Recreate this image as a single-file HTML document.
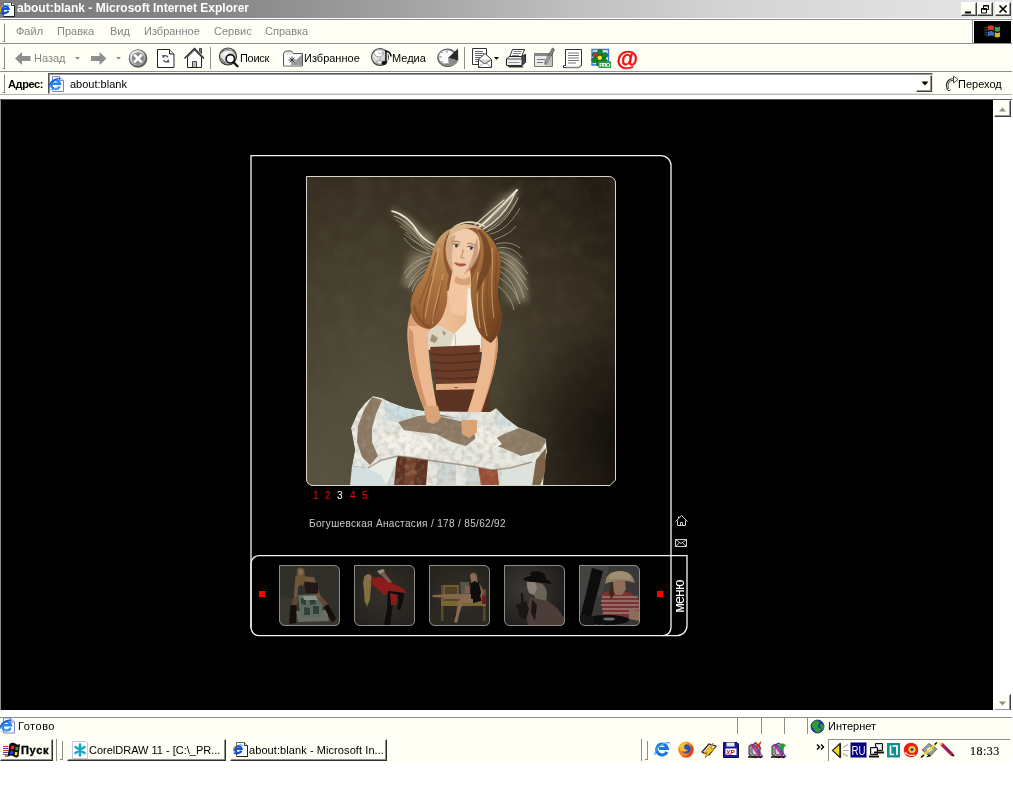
<!DOCTYPE html>
<html lang="ru">
<head>
<meta charset="utf-8">
<title>about:blank - Microsoft Internet Explorer</title>
<style>
*{box-sizing:border-box;margin:0;padding:0}
html,body{width:1013px;height:786px;overflow:hidden;background:#fff}
body{position:relative;font-family:"Liberation Sans","DejaVu Sans",sans-serif;font-size:11px;color:#000}
.abs{position:absolute}
.t{position:absolute;white-space:nowrap;line-height:13px;height:13px;will-change:transform}
#win{left:0;top:0;width:1012px;height:762px;background:#fffff6}
#title{left:0;top:0;width:1012px;height:18px;background:linear-gradient(90deg,#7c7c7c 0,#848484 20%,#a2a2a2 40%,#c0c0c0 57%,#d4d4d4 72%,#e6e6e6 100%)}
#title .t{left:17px;top:2px;color:#fff;font-weight:bold;font-size:12px;letter-spacing:0}
#menu{will-change:auto}
.cb{position:absolute;top:2px;width:16px;height:14px;background:#fffff6;border:1px solid;border-color:#fff #404040 #404040 #fff;box-shadow:inset -1px -1px 0 #9a9a94}
.hl{position:absolute;height:1px;left:0;width:1012px}
.grip{position:absolute;width:3px;border:1px solid;border-color:#fff #8a8a84 #8a8a84 #fff;left:2px}
.gray{color:#858585}
.sep{position:absolute;width:2px;border-left:1px solid #8e8e88;border-right:1px solid #fff}
#content{left:1px;top:99px;width:992px;height:611px;background:#000}
.sbtn{position:absolute;left:994px;width:17px;height:17px;background:#fffff6;border:1px solid;border-color:#fff #404040 #404040 #fff;box-shadow:inset -1px -1px 0 #9a9a94}
.tb{position:absolute;top:739px;height:22px;background:#fffff6;border:1px solid;border-color:#fff #303030 #303030 #fff;box-shadow:inset -1px -1px 0 #8e8e88}
.pan{position:absolute;top:717px;height:17px;border-left:1px solid #8e8e88;border-top:1px solid #8e8e88}
</style>
</head>
<body>
<div id="win" class="abs"></div>

<!-- title bar -->
<div id="title" class="abs"><div class="t">about:blank - Microsoft Internet Explorer</div></div>
<div class="cb" style="left:961px"></div>
<div class="cb" style="left:977px"></div>
<div class="cb" style="left:995px"></div>

<!-- menu bar -->
<div class="hl" style="top:19px;background:#8e8e88"></div>
<div class="hl" style="top:20px;background:#fff"></div>
<div class="grip" style="top:23px;height:19px"></div>
<div class="t gray" style="left:16px;top:25px">Файл</div>
<div class="t gray" style="left:57px;top:25px">Правка</div>
<div class="t gray" style="left:110px;top:25px">Вид</div>
<div class="t gray" style="left:144px;top:25px">Избранное</div>
<div class="t gray" style="left:214px;top:25px">Сервис</div>
<div class="t gray" style="left:265px;top:25px">Справка</div>
<div class="abs" style="left:972px;top:20px;width:1px;height:23px;background:#8e8e88"></div>
<div class="abs" style="left:974px;top:21px;width:37px;height:22px;background:#000"></div>

<!-- toolbar -->
<div class="hl" style="top:43px;background:#8e8e88"></div>
<div class="hl" style="top:44px;background:#fff"></div>
<div class="grip" style="top:47px;height:22px"></div>
<div class="t gray" style="left:34px;top:52px">Назад</div>
<div class="t" style="left:240px;top:52px;letter-spacing:-0.3px">Поиск</div>
<div class="t" style="left:304px;top:52px">Избранное</div>
<div class="t" style="left:392px;top:52px">Медиа</div>
<div class="sep" style="left:210px;top:47px;height:22px"></div>
<div class="sep" style="left:464px;top:47px;height:22px"></div>

<!-- address bar -->
<div class="hl" style="top:71px;background:#8e8e88"></div>
<div class="hl" style="top:72px;background:#fff"></div>
<div class="grip" style="top:74px;height:19px"></div>
<div class="t" style="left:8px;top:78px;font-weight:bold;letter-spacing:-0.4px">Адрес:</div>
<div class="abs" style="left:48px;top:73px;width:885px;height:21px;background:#fff;border:1px solid;border-color:#55554f #e8e6df #e8e6df #55554f;box-shadow:inset 1px 1px 0 #9a9a94"></div>
<div class="t" style="left:70px;top:78px">about:blank</div>
<div class="abs" style="left:916px;top:75px;width:16px;height:17px;background:#fffff6;border:1px solid;border-color:#fff #404040 #404040 #fff;box-shadow:inset -1px -1px 0 #9a9a94"></div>
<div class="t" style="left:958px;top:78px">Переход</div>
<div class="hl" style="top:94px;background:#b5b3ad"></div>
<div class="hl" style="top:95px;height:4px;background:#fff"></div>

<!-- ICONS-START -->
<svg class="abs" style="left:0;top:0;z-index:5" width="1013" height="120" viewBox="0 0 1013 120">
<defs>
<g id="ie">
<path d="M4.500 .5H11.500L15.500 4.500V15.500H4.500Z" fill="#fff" stroke="#7d86c8" stroke-width="1"/>
<path d="M11.500 .5V4.500H15.500" fill="#dfe3f4" stroke="#7d86c8" stroke-width="1"/>
<path d="M11.600 10.400A4.400 4.400 0 1 1 11.900 7.700H4.200" fill="none" stroke="#2488f0" stroke-width="2.400"/>
<path d="M1 11.500C.5 6.500 8 1.500 12.500 3" fill="none" stroke="#2456c8" stroke-width="1.200"/>
<path d="M2 13.500C5 14.500 9 12.500 12 9.500" fill="none" stroke="#6cc0ff" stroke-width="1"/>
</g>
<g id="ie2">
<path d="M3.500 1.500H11.500L14.500 4.500V15.500H3.500Z" fill="#fff" stroke="#6a6a6a" stroke-width="1"/>
<path d="M14.500 4.500V15.500H3.500" fill="none" stroke="#222" stroke-width="1"/>
<path d="M11.500 1.500V4.500H14.500" fill="#e4e4e4" stroke="#333" stroke-width="1"/>
<path d="M8.400 9.800A3.300 3.300 0 1 1 8.600 7.800H2.800" fill="none" stroke="#1450dc" stroke-width="2.200"/>
<path d="M6 4.300C7.500 3.500 9 4 9.500 5" fill="none" stroke="#3aa4f4" stroke-width="1.200"/>
<path d="M.6 10.500C0 7.500 1.500 5.500 3.500 4.500" fill="none" stroke="#d8a020" stroke-width="1.200"/>
<path d="M.8 11.500C2 13 4 13 5.500 12.500" fill="none" stroke="#1a2a9c" stroke-width="1.200"/>
</g>
<radialGradient id="gl" cx="0.4" cy="0.35" r="0.7"><stop offset="0" stop-color="#ffffff"/><stop offset="0.6" stop-color="#d2d2d2"/><stop offset="1" stop-color="#8a8a8a"/></radialGradient>
</defs>
<!-- title icon -->
<use href="#ie2" x="0" y="1"/>
<!-- caption buttons glyphs -->
<path d="M965 12.500h6" stroke="#000" stroke-width="2"/>
<path d="M983.500 5.500h5v4h-5zM983.500 6h5M981.500 8.500h5v4.500h-5zM981.500 9h5" fill="#fffff6" stroke="#000" stroke-width="1"/>
<path d="M999.500 5.500l7 7M1006.500 5.500l-7 7" stroke="#000" stroke-width="1.700"/>
<!-- throbber windows flag -->
<g transform="translate(985,24.500) scale(0.88)" opacity="0.9">
<path d="M3 2C6 .5 8 .5 10 2V7C8 5.500 6 5.500 3 7Z" fill="#e8442c"/>
<path d="M11 2.300C13 3.500 15 3.500 17 2.300V7.300C15 8.500 13 8.500 11 7.300Z" fill="#3cb44a"/>
<path d="M3 8.500C6 7 8 7 10 8.500V13.500C8 12 6 12 3 13.500Z" fill="#3c78e0"/>
<path d="M11 8.800C13 10 15 10 17 8.800V13.800C15 15 13 15 11 13.800Z" fill="#f0c828"/>
<path d="M0 3v10M1.500 2.500v11" stroke="#9aa" stroke-width="0.800" stroke-dasharray="1 1"/>
</g>
<!-- back / forward -->
<path d="M15 58.500L22 52V56H30.500V61H22V65Z" fill="#8e8e8e"/>
<path d="M75 57h5l-2.500 2.800z" fill="#8e8e8e"/>
<path d="M106.500 58.500L99.500 52V56H91V61H99.500V65Z" fill="#8e8e8e"/>
<path d="M116 57h5l-2.500 2.800z" fill="#8e8e8e"/>
<!-- stop -->
<circle cx="138" cy="58.500" r="9.300" fill="#5a5a5a"/>
<circle cx="137.600" cy="58" r="8" fill="url(#gl)"/>
<circle cx="138" cy="58.500" r="6.200" fill="#8c8c8c"/>
<path d="M134.200 54.700l7.600 7.600M141.800 54.700l-7.600 7.600" stroke="#fff" stroke-width="2.600"/>
<!-- refresh -->
<path d="M157.500 49.500H169.500L174 54V67.500H157.500Z" fill="#fff" stroke="#222" stroke-width="1"/>
<path d="M169.500 49.500V54H174" fill="#ddd" stroke="#222" stroke-width="1"/>
<path d="M168 57.500A3 3 0 0 0 163 56.500M163.500 60A3 3 0 0 0 168.500 61" fill="none" stroke="#555" stroke-width="1.300"/>
<path d="M162 54.500l3 1.500-2 2.500zM169.500 63l-3-1.500 2-2.500z" fill="#555"/>
<!-- home -->
<path d="M184.500 58.500L194.500 48.500L204 58.500" fill="none" stroke="#222" stroke-width="1.300"/>
<path d="M187.500 57V67.500H201.500V57L194.500 50Z" fill="#fff" stroke="#222" stroke-width="1"/>
<path d="M199.500 48.500h2v5l-2-2z" fill="#888" stroke="#222" stroke-width="0.800"/>
<path d="M192.500 67V61.500H196.500V67" fill="#bbb" stroke="#444" stroke-width="1"/>
<!-- search -->
<circle cx="228" cy="56.500" r="8.500" fill="url(#gl)" stroke="#3a3a3a" stroke-width="1.200"/>
<path d="M221.500 52.500c2.500-3 6-3.500 9-2M220.500 58c2 1.500 3 4 5.500 5.500M231 49.500c2 1 4 3 5 5.500" fill="none" stroke="#777" stroke-width="1.200"/>
<circle cx="230.300" cy="58.800" r="4.200" fill="#fdfdfd" stroke="#111" stroke-width="1.600"/>
<path d="M233.500 62.200l4 4" stroke="#111" stroke-width="2.300" stroke-linecap="round"/>
<!-- favorites folder -->
<path d="M283.500 53.500L285.500 51H291.500L293.500 53.500H302.500V66H283.500Z" fill="#e6e6e6" stroke="#555" stroke-width="1"/>
<path d="M284 54.500H302V65.500H284Z" fill="#fafafa"/>
<path d="M302 54.500V65.500H290Z" fill="#9a9a9a"/>
<path d="M292 56.500v7M288.500 60h7M289.500 57.500l5 5M294.500 57.500l-5 5" stroke="#333" stroke-width="0.900"/>
<!-- media -->
<circle cx="380" cy="57" r="8.500" fill="url(#gl)" stroke="#444" stroke-width="1.100"/>
<path d="M373.500 53c2-3 6-4 9-2.500l1 4-3 2.500-4-.5zM376 62l4-1.500 4 2c-2 2-6 2-8-.5z" fill="#fff" stroke="#888" stroke-width="0.800"/>
<path d="M378 52.500l3 1.500 2.500-1M380.500 57l-.5 3.500" stroke="#999" stroke-width="0.800" fill="none"/>
<path d="M386 63V51C388.500 51.500 391 53.500 391 56.500" fill="none" stroke="#111" stroke-width="1.600"/>
<ellipse cx="384" cy="63" rx="2.500" ry="1.900" fill="#111"/>
<path d="M387.300 52.500v9" stroke="#fff" stroke-width="0.900"/>
<!-- history -->
<ellipse cx="447.500" cy="57.800" rx="9.800" ry="8.800" fill="#9a9a9a" stroke="#444" stroke-width="1"/>
<ellipse cx="446.800" cy="57" rx="8.300" ry="7.300" fill="#fbfbfb" stroke="#777" stroke-width="0.700"/>
<path d="M448 58L458 48.500L458.300 60.500Z" fill="#2a2a2a"/>
<path d="M448 58L458.300 60.500C457 64 453 66.500 449 66.500Z" fill="#8a8a8a"/>
<path d="M447 50.500v2M439.500 57h2M447 63v1.800M441.500 52l1.200 1.200M441.500 62.500l1.200-1.200" stroke="#555" stroke-width="0.900"/>
<!-- mail -->
<path d="M472.500 48.500H486.500V64.500H472.500Z" fill="#fff" stroke="#333" stroke-width="1"/>
<path d="M475 51.500h8M475 53.500h9M475 55.500h7M475 57.500h5M475 59.500h4M475 61.500h3" stroke="#6a6a6a" stroke-width="1"/>
<path d="M478.500 59.500L485 53.500L491.500 59.500V67.500H478.500Z" fill="#fff" stroke="#333" stroke-width="1"/>
<path d="M478.500 59.500L485 64L491.500 59.500" fill="#d4d4d4" stroke="#444" stroke-width="0.900"/>
<path d="M479 67L483.500 63M491 67L486.500 63" stroke="#888" stroke-width="0.800"/>
<path d="M494 57h5l-2.500 2.800z" fill="#000"/>
<!-- print -->
<path d="M512.500 49.500H524.500L521.500 57H509.500Z" fill="#fff" stroke="#333" stroke-width="1"/>
<path d="M513.500 51.500h8M512.800 53.500h8M512 55.500h7" stroke="#7a7a7a" stroke-width="0.900"/>
<path d="M506.500 59L509.500 56.500H521.500L525.500 54.500V62L522 65.500H506.500Z" fill="#efefef" stroke="#222" stroke-width="1"/>
<path d="M521.500 56.500L525.500 54.500V62L522 65.500V59Z" fill="#4a4a4a" stroke="#222" stroke-width="0.800"/>
<path d="M506.500 59H522" stroke="#444" stroke-width="0.900"/>
<path d="M507.500 65.500H522L523.500 67.500H509Z" fill="#333"/>
<path d="M508.500 62.500h11" stroke="#999" stroke-width="1"/>
<!-- edit -->
<path d="M534.500 53.500H552.500V66.500H534.500Z" fill="#e9e9e9" stroke="#777" stroke-width="1"/>
<path d="M534.500 53.500H552.500V56H534.500Z" fill="#888"/>
<path d="M537 59.500h8M537 62.500h6" stroke="#777" stroke-width="1"/>
<path d="M552.500 48L554.500 49.500L547.500 63L545 64.500L545.200 61.500Z" fill="#8a8a8a" stroke="#444" stroke-width="0.800"/>
<path d="M546 56h6v10h-6z" fill="#aaa" opacity="0.600"/>
<!-- discuss -->
<path d="M565.500 49.500H581.500V65.500L579 67.500H563.500V65.500H565.500Z" fill="#fff" stroke="#333" stroke-width="1"/>
<path d="M566 67.500H579L581.500 65.500" fill="none" stroke="#888" stroke-width="1.600"/>
<path d="M568 53h11M568 55.500h11M568 58h11M568 60.500h11M568 63h8" stroke="#666" stroke-width="0.900"/>
<!-- icq -->
<path d="M592 49.500H608.500V65H592Z" fill="#e6eefb" stroke="#3a78e4" stroke-width="1.400"/>
<g fill="#12862a" stroke="#0a5a18" stroke-width="0.600"><ellipse cx="600" cy="52.800" rx="2.700" ry="3.300"/><ellipse cx="604.600" cy="55.500" rx="3.300" ry="2.700" transform="rotate(-30 604.600 55.500)"/><ellipse cx="604" cy="60.800" rx="3.300" ry="2.700" transform="rotate(35 604 60.800)"/><ellipse cx="599" cy="63" rx="2.700" ry="3.200"/><ellipse cx="594.800" cy="60" rx="3.200" ry="2.600" transform="rotate(-30 594.800 60)"/><ellipse cx="595.400" cy="54.800" rx="3.200" ry="2.600" transform="rotate(30 595.400 54.800)"/></g>
<circle cx="599.800" cy="57.800" r="2.100" fill="#f8e420"/>
<circle cx="595.300" cy="55" r="2.100" fill="#e62020"/>
<path d="M598.500 61.500H611V68H598.500Z" fill="#2c9c3c"/>
<text x="599.300" y="67.200" font-family="Liberation Sans,sans-serif" font-size="6" font-weight="bold" fill="#fff" textLength="11">PRO</text>
<!-- @ -->
<text x="616.500" y="65.500" font-family="Liberation Sans,sans-serif" font-size="22" font-weight="bold" fill="#f01010" stroke="#f01010" stroke-width="0.500">@</text>
<!-- address bar icon -->
<use href="#ie" x="48" y="76"/>
<path d="M921.500 81.500h7l-3.500 4z" fill="#000"/>
<!-- go icon -->
<path d="M948 89C946 84 948 79.500 953 79.500H955" fill="none" stroke="#222" stroke-width="2.600"/><path d="M948 88.500C946.500 84 948.500 79.500 953 79.500H955" fill="none" stroke="#fffff6" stroke-width="0.900"/>
<path d="M953.500 76l4.500 3.500-4.500 3.500z" fill="#fffff6" stroke="#333" stroke-width="0.900"/>
<path d="M947 89.500c1 1.500 3 1.500 3.500 0" fill="none" stroke="#333" stroke-width="1"/>
<!-- scroll arrow -->
<path d="M999 111.500h7l-3.500-4z" fill="#8e8e8e"/>
</svg>
<svg class="abs" style="left:0;top:700px;z-index:5" width="1013" height="66" viewBox="0 700 1013 66">
<path d="M999 701.500h7l-3.500 4z" fill="#8e8e8e"/>
<!-- status ie -->
<use href="#ie" x="-1" y="717.500"/>
<!-- globe -->
<circle cx="817.500" cy="726.500" r="6.500" fill="#1c3cb4" stroke="#102060" stroke-width="0.800"/>
<path d="M813 722c2-2 5-2 6 0s-2 3-1 5 3 1 3 3-3 3-5 2-1-3-3-4-1-4 0-6zM821 724c2 0 3 2 3 4s-2 2-3 1 0-3-1-4z" fill="#2c9c34"/>
<!-- start flag -->
<g transform="translate(3,742)">
<path d="M6.500 2C8.500 .3 11 .3 13 2C14.500 3 15.500 3 17 1.800L15.500 14.500C14 15.800 12.500 15.800 11 14.500C9 13 7 13 4.500 14.800Z" fill="#0a0a0a"/>
<path d="M8 4.200C9 3.400 10.200 3.400 11.300 4.200L10.900 7.500C9.900 6.900 8.700 6.900 7.500 7.600Z" fill="#f02818"/>
<path d="M12.700 4.800C13.500 5.300 14.300 5.300 15.300 4.700L14.800 8C14 8.500 13.200 8.500 12.300 8Z" fill="#20b030"/>
<path d="M7.200 9.300C8.300 8.600 9.500 8.600 10.600 9.300L10.200 12.500C9.200 11.900 8 11.900 6.800 12.600Z" fill="#2440e0"/>
<path d="M12 9.800C12.800 10.300 13.600 10.300 14.600 9.700L14.100 13C13.300 13.500 12.500 13.500 11.600 13Z" fill="#f4dc20"/>
<path d="M0 4.500h5.500M0 8.500h5M0 12.500h4.500" stroke="#e03030" stroke-width="1"/>
<path d="M0 6.500h5.200M0 10.500h4.800" stroke="#3048d0" stroke-width="1"/>
<path d="M1 5.500h4M1 7.500h4M1 9.500h3.800M1 11.500h3.500" stroke="#fff" stroke-width="1"/>
<path d="M2 14h3.500" stroke="#222" stroke-width="1"/>
</g>
<!-- taskbar divider -->
<path d="M56.500 739v22" stroke="#8e8e88"/><path d="M57.500 739v22" stroke="#fff"/>
<path d="M60.500 741v18M60 741.500h2" stroke="#fff"/><path d="M62.500 741v18.500M60 759.500h3" stroke="#8e8e88"/>
<!-- corel icon -->
<path d="M72.500 741.500H86L87.500 743V758.500H72.500Z" fill="#fff" stroke="#c8c8d8" stroke-width="1"/>
<g stroke="#18a8c0" stroke-width="2.600" stroke-linecap="round"><path d="M80 744.500v11M75.500 747l9 6M84.500 747l-9 6"/></g>
<!-- task ie icon -->
<use href="#ie2" x="233" y="741"/>
<!-- quick launch -->
<path d="M641.500 739v22" stroke="#8e8e88"/><path d="M642.500 739v22" stroke="#fff"/>
<path d="M645.500 741v18" stroke="#fff"/><path d="M647.500 741v18.500M645 759.500h3" stroke="#8e8e88"/>
<g>
<path d="M667 752A5.500 5.500 0 1 1 667.500 748.500H659" fill="none" stroke="#1a78e0" stroke-width="3"/>
<path d="M655 755C654 749 664 741 670 743" fill="none" stroke="#58b0f8" stroke-width="1.400"/>
</g>
<circle cx="686" cy="749.500" r="7.800" fill="#f08018"/>
<circle cx="686.500" cy="749" r="4.600" fill="#3050b8"/>
<path d="M679 747c1-4 6-6 10-4-3 0-5 2-5 4s2 3 4 3c-2 2-6 2-8 0z" fill="#f8c030"/>
<path d="M692 745c2 3 2 8-1 11-3 2-7 2-10 0 4 1 8-1 9-4s1-5 2-7z" fill="#e04810"/>
<path d="M702 752L709 744L716 746L709 755Z" fill="#f4f4f4" stroke="#222" stroke-width="1.200"/>
<path d="M703 754L713 743L711 748.500L715 748L705 758L707 752.500Z" fill="#f8c820" stroke="#a06808" stroke-width="0.700"/>
<path d="M723.500 742.500H737L738.500 744V757.500H723.500Z" fill="#1c1c98" stroke="#0c0c50" stroke-width="1"/>
<path d="M726.500 742.500h8v4h-8z" fill="#e8e8f4"/>
<path d="M725.500 748.500h11v6.500h-11z" fill="#fff"/>
<text x="726" y="754.600" font-family="Liberation Sans,sans-serif" font-size="6.500" font-weight="bold" font-style="italic" fill="#d01818">XP</text>
<g id="spk">
<path d="M749 746L756 743L760 746V754L756 758L749 755Z" fill="#9a9a9a" stroke="#333" stroke-width="1"/>
<ellipse cx="755" cy="750.500" rx="3" ry="4.500" fill="#d0d0d0" stroke="#444" stroke-width="0.800"/>
<path d="M751 744L761 758" stroke="#c02890" stroke-width="2"/>
<path d="M753 744L763 757" stroke="#2838c0" stroke-width="1.200"/>
<path d="M748 757h14" stroke="#111" stroke-width="1.600"/>
</g>
<path d="M755 742l6 7M761 742l-5 6" stroke="#e02020" stroke-width="1.300"/>
<use href="#spk" x="23" y="0"/>
<path d="M779 748l3-5 4 2-4 5z" fill="#20a030"/>
<!-- chevrons -->
<path d="M817 744.500l2.500 2.500-2.500 2.500M821 744.500l2.500 2.500-2.500 2.500" fill="none" stroke="#000" stroke-width="1.400"/>
<!-- tray -->
<path d="M828.500 761V739.500H1010" fill="none" stroke="#8e8e88" stroke-width="1"/>
<path d="M832.500 750.500L840 743.500V757.500Z" fill="#f0e020" stroke="#222" stroke-width="1.100"/>
<path d="M840.300 743.500v14" stroke="#222" stroke-width="1.600"/>
<path d="M843 750.500h5.500M843 747.500l5-3M843 753.500l5 3" stroke="#aaa" stroke-width="1.100"/>
<path d="M850.500 742.500h16v15h-16z" fill="#000080"/>
<text x="851.500" y="755" font-family="Liberation Sans,sans-serif" font-size="12" fill="#fff" textLength="14" lengthAdjust="spacingAndGlyphs">RU</text>
<path d="M875.500 743.500h7v7h-7z" fill="#c8c8c8" stroke="#111" stroke-width="1"/><path d="M877 745h4v3.500h-4z" fill="#fff"/>
<path d="M870.500 747.500h7v7h-7z" fill="#c8c8c8" stroke="#111" stroke-width="1"/><path d="M872 749h4v3.500h-4z" fill="#fff"/>
<path d="M869 756.500h10M874 752.500h10" stroke="#111" stroke-width="1.800"/>
<path d="M887 743h13v14.500h-13z" fill="#109090"/>
<path d="M890.500 745.500v9h3.500M892.500 746h4.500v9" fill="none" stroke="#fff" stroke-width="1.700"/>
<circle cx="911" cy="750" r="7.300" fill="#e81c10"/>
<circle cx="912" cy="749.500" r="3.600" fill="#f4d820"/>
<circle cx="912" cy="749.500" r="1.600" fill="#3040c0"/>
<path d="M905 752c2 3 6 4 10 3" stroke="#fff" stroke-width="1.200" fill="none"/>
<path d="M922 750L929 743.500L937 749L930 756.500Z" fill="#9c9c9c" stroke="#555" stroke-width="0.800"/><path d="M926.500 749.500l3-2.500 3 2.200-3 2.800z" fill="#f4f4f4"/><path d="M926 757.500l5-1.500-2-2z" fill="#111"/>
<path d="M921.500 757L936 744" stroke="#e8e020" stroke-width="1.800"/><path d="M921 757.500l3-2.500" stroke="#111" stroke-width="1.600"/>
<path d="M934.500 744.500l2.500-2" stroke="#111" stroke-width="1.600"/>
<path d="M942 744.500L951.500 754" stroke="#e01828" stroke-width="3.400" stroke-linecap="round"/>
<path d="M942.500 745L951 753.500" stroke="#4030c0" stroke-width="1.100"/>
<path d="M940 743l2 1.300" stroke="#e8e020" stroke-width="2"/>
<path d="M952 754.500l2 1.500" stroke="#111" stroke-width="2"/>
</svg>

<!-- ICONS-END -->
<!-- content -->
<div id="content" class="abs"></div>
<div class="abs" style="left:0;top:99px;width:1px;height:612px;background:#8e8e88"></div>
<div class="abs" style="left:993px;top:99px;width:19px;height:612px;background:#fff"></div>
<div class="abs" style="left:0;top:99px;width:1012px;height:1px;background:#55554f"></div>
<div class="sbtn" style="top:100px"></div>
<div class="sbtn" style="top:694px"></div>


<!-- page content: frames -->
<svg class="abs" style="left:0;top:0" width="1013" height="786" viewBox="0 0 1013 786" fill="none">
<g stroke="#f0f0f0" stroke-width="1.35">
<path d="M251 628V155.600H661A10 10 0 0 1 671 165.600V627.600A8 8 0 0 1 663 635.600"/>
<path d="M251 563.600A8 8 0 0 1 259 555.600H687V625.600A10 10 0 0 1 677 635.600H259A8 8 0 0 1 251 627.600Z"/>
</g>
<rect x="259" y="591" width="6" height="6" fill="#f00"/>
<rect x="657" y="591" width="6" height="6" fill="#f00"/>
<!-- home icon -->
<g stroke="#cfcfcf" stroke-width="1">
<path d="M675.5 521.5L681.5 515.5L687.5 521.5M677.5 520.5V525.5H685.5V520.5M680.5 525.5V522.5H682.5V525.5M678.500 516.500V518.500"/>
<path d="M675.500 539.500H686.500V546.500H675.500ZM675.500 539.500L681 543.500L686.500 539.500M675.500 546.500L679.500 542.800M686.500 546.500L682.500 542.800"/>
</g>
</svg>
<div class="t" style="left:313px;top:489px;font-size:10px;color:#f00;letter-spacing:0"><span style="position:absolute;left:0">1</span><span style="position:absolute;left:12px">2</span><span style="position:absolute;left:24px;color:#fff">3</span><span style="position:absolute;left:37px">4</span><span style="position:absolute;left:49px">5</span></div>
<div class="t" id="nm" style="left:309px;top:517px;font-size:10px;color:#cccccc;letter-spacing:0.34px">Богушевская Анастасия / 178 / 85/62/92</div>
<div class="t" id="menu" style="left:661.500px;top:589.500px;width:34px;text-align:center;font-size:14px;letter-spacing:-0.8px;color:#fff;transform:rotate(-90deg);transform-origin:50% 50%;font-weight:normal">меню</div>


<!-- PHOTO-START -->
<!-- main photo -->
<svg class="abs" style="left:306px;top:176px" width="310" height="310" viewBox="0 0 310 310">
<defs>
<clipPath id="pc"><path d="M0 0H303A7 7 0 0 1 310 7V304L304 310H7A7 7 0 0 1 0 303Z"/></clipPath>
<radialGradient id="bg1" cx="0.25" cy="0.7" r="0.95"><stop offset="0" stop-color="#544e3c"/><stop offset="0.45" stop-color="#453e2d"/><stop offset="0.75" stop-color="#362e21"/><stop offset="1" stop-color="#231c13"/></radialGradient>
<radialGradient id="bg2" cx="1.05" cy="0.85" r="0.45"><stop offset="0" stop-color="#0c0906" stop-opacity="0.9"/><stop offset="0.5" stop-color="#0c0906" stop-opacity="0.45"/><stop offset="1" stop-color="#0c0906" stop-opacity="0"/></radialGradient>
<radialGradient id="bg3" cx="0.05" cy="1" r="0.4"><stop offset="0" stop-color="#5e5846" stop-opacity="0.8"/><stop offset="1" stop-color="#5e5846" stop-opacity="0"/></radialGradient>
<filter id="b1" x="-20%" y="-20%" width="140%" height="140%"><feGaussianBlur stdDeviation="1"/></filter>
<filter id="b2" x="-30%" y="-30%" width="160%" height="160%"><feGaussianBlur stdDeviation="3"/></filter>
<filter id="b05" x="-20%" y="-20%" width="140%" height="140%"><feGaussianBlur stdDeviation="0.55"/></filter>
<filter id="nz" x="0" y="0" width="100%" height="100%"><feTurbulence type="fractalNoise" baseFrequency="0.06" numOctaves="3" seed="4"/><feColorMatrix values="0 0 0 0 0.16  0 0 0 0 0.14  0 0 0 0 0.09  0.9 0 0 0 -0.3"/></filter>
<filter id="nz2" x="0" y="0" width="100%" height="100%"><feTurbulence type="fractalNoise" baseFrequency="0.18" numOctaves="2" seed="9"/><feColorMatrix values="0 0 0 0 0.42  0 0 0 0 0.33  0 0 0 0 0.25  1.8 0 0 0 -0.75"/></filter>
<linearGradient id="hairL" x1="0" y1="0" x2="0" y2="1"><stop offset="0" stop-color="#cba06c"/><stop offset="0.35" stop-color="#b47e48"/><stop offset="1" stop-color="#965b30"/></linearGradient>
<linearGradient id="hairR" x1="0" y1="0" x2="0.6" y2="1"><stop offset="0" stop-color="#b88850"/><stop offset="0.5" stop-color="#996332"/><stop offset="1" stop-color="#734221"/></linearGradient>
<linearGradient id="skin" x1="0" y1="0" x2="1" y2="0"><stop offset="0" stop-color="#d39a6c"/><stop offset="0.4" stop-color="#efc097"/><stop offset="1" stop-color="#d9a276"/></linearGradient>
<clipPath id="skc"><path d="M67 220L76 222L84 226L100 232L119 235L184 236L190 232L200 242L212 251L228 257L240 263L241 276L238 290L237 310L44 310L46 290L49 274L45 252L52 236L60 226Z"/></clipPath>
</defs>
<g clip-path="url(#pc)">
<rect width="310" height="310" fill="url(#bg1)"/>
<rect width="310" height="310" filter="url(#nz)" opacity="0.3"/>
<rect width="310" height="310" fill="url(#bg3)"/>
<rect width="310" height="310" fill="url(#bg2)"/>

<!-- soft hair halo -->
<ellipse cx="110" cy="94" rx="11" ry="20" fill="#978c72" opacity="0.4" filter="url(#b2)"/>
<ellipse cx="207" cy="104" rx="11" ry="25" fill="#978c72" opacity="0.45" filter="url(#b2)"/>
<ellipse cx="192" cy="34" rx="8" ry="22" fill="#a39a82" opacity="0.4" filter="url(#b2)" transform="rotate(42 192 34)"/>
<ellipse cx="112" cy="56" rx="6" ry="20" fill="#978c72" opacity="0.3" filter="url(#b2)" transform="rotate(-50 112 56)"/>
<!-- flying hair wisps -->
<g fill="none" stroke-linecap="butt" filter="url(#b2)" opacity="0.450">
<path d="M86 35C98 38 106 46 112 56C118 64 126 70 138 72" stroke="#cfc7ae" stroke-width="4"/>
<path d="M170 54C184 46 198 32 211 14" stroke="#d8d0b8" stroke-width="6"/>
<path d="M128 76C114 80 104 92 100 110" stroke="#b5ac92" stroke-width="8"/>
<path d="M192 74C208 82 216 100 218 126" stroke="#b5ac92" stroke-width="9"/>
<path d="M126 62C114 58 104 52 98 44" stroke="#b5ac92" stroke-width="5"/>
</g>
<g fill="none" stroke-linecap="round" filter="url(#b05)">
<path d="M86 35C98 38 106 46 112 56C118 64 126 70 138 72" stroke="#f0ead6" stroke-width="1.700"/>
<path d="M88 40C100 44 108 54 116 64C122 70 128 74 136 76" stroke="#c9c0a8" stroke-width="1" opacity="0.850"/>
<path d="M94 50C104 56 112 64 122 72M98 58C106 64 114 70 124 76M90 44C100 50 108 58 118 68" stroke="#b4ab92" stroke-width="0.800" opacity="0.750"/>
<path d="M172 52C182 44 196 30 211 14" stroke="#f2ecd8" stroke-width="2"/>
<path d="M176 54C190 46 202 34 209 17" stroke="#ddd5bd" stroke-width="1.400"/>
<path d="M168 50C176 42 186 34 198 24" stroke="#d3cbb3" stroke-width="1.200"/>
<path d="M180 56C192 52 204 40 212 22" stroke="#bfb79f" stroke-width="1" opacity="0.900"/>
<path d="M184 58C196 56 206 46 214 32M178 52C186 40 192 32 200 28M174 50C184 40 196 28 206 20M182 54C194 46 202 38 210 26" stroke="#b4ab92" stroke-width="0.800" opacity="0.850"/>
<path d="M146 53C154 45 166 44 178 50" stroke="#e2d9bf" stroke-width="1.600"/>
</g>
<g fill="none" stroke="#c2b9a2" stroke-width="0.800" opacity="0.800" filter="url(#b05)">
<path d="M126 84C114 86 106 92 100 102M128 90C116 94 110 100 104 110M124 78C112 76 104 70 98 62M130 70C120 66 112 60 108 52M122 96C112 102 108 108 106 116M120 104C112 110 108 118 108 124M126 80C114 82 104 88 98 98M124 88C114 92 106 100 102 112M128 74C118 72 108 66 100 56"/>
<path d="M192 80C204 84 212 92 220 104M194 90C206 96 214 106 218 122M190 100C202 106 210 116 214 128M192 72C202 70 210 74 216 82M188 64C196 60 204 58 210 50M192 110C200 116 206 124 208 134M194 84C204 88 212 98 222 114M193 76C204 78 214 86 222 98M192 94C202 100 210 110 212 124M190 68C198 66 206 66 214 72"/>
</g>

<!-- hair behind head -->
<path d="M146 52C156 46 172 48 180 56C190 66 196 80 192 94C188 106 187 116 190 128C196 144 194 158 183 166L168 160L166 118L146 116L140 130L134 150L121 152C113 142 112 128 117 114C124 100 124 86 128 74C131 62 138 56 146 52Z" fill="#8a5630" filter="url(#b05)"/>

<!-- torso, neck, shoulders -->
<g filter="url(#b05)">
<path d="M147 92L164 94L166 116L178 126C186 130 190 140 191 156L192 172L176 176L124 174L102 168C100 150 102 132 116 124L144 114Z" fill="url(#skin)"/>
<path d="M147 92L164 94L166 116L158 140L146 138L142 118Z" fill="#f2c6a0"/>
<path d="M150 100C154 104 160 104 164 100L165 108C160 110 154 110 148 106Z" fill="#c48a5e" opacity="0.6"/>
</g>
<!-- face -->
<g filter="url(#b05)" transform="rotate(9 156 76)">
<path d="M139 70C139 58 146 52 156 52C166 52 173 58 173 70C173 82 167 93 161 98C158 100.500 154 100.500 151 98C145 93 139 82 139 70Z" fill="#f1cba9"/>
<path d="M139 70C139 82 145 93 151 98C147 88 145 76 147 60C142 62 139 66 139 70Z" fill="#c0916a" opacity="0.600"/>
<path d="M168 60C172 66 173 76 170 86C168 92 164 96 161 98C166 90 168 76 168 60Z" fill="#a97a55" opacity="0.550"/>
<ellipse cx="149" cy="71" rx="3" ry="1.500" fill="#f4ece2"/><ellipse cx="164" cy="71" rx="3" ry="1.500" fill="#f4ece2"/><ellipse cx="149.500" cy="71" rx="1.600" ry="1.500" fill="#3a281c"/><ellipse cx="164.500" cy="71" rx="1.600" ry="1.500" fill="#3a281c"/><path d="M145.500 70C147.500 68.800 150.500 68.800 152.500 70M160.500 70C162.500 68.800 165.500 68.800 167.500 70" stroke="#3a281c" stroke-width="1" fill="none"/>
<path d="M144.500 67.500C147 66 150 66 153 67M160 67C163 66 166 66 168.500 67.500" stroke="#8a6846" stroke-width="1" fill="none"/>
<path d="M150.500 88C154 90.500 158 90.500 162 87.500C158 88.500 154 88.500 150.500 88Z" fill="#a8483f" stroke="#a8483f" stroke-width="1.400"/>
<path d="M157 73L156 81.500L159.500 82" stroke="#b78863" stroke-width="1.200" fill="none"/>
</g>
<!-- white halter top -->
<g filter="url(#b05)">
<path d="M162 112L167 114L171 146L175 154L175 172L150 174L122 173L121 158L130 148L148 158L160 146Z" fill="#f3efe2"/>
<path d="M130 148L148 158L144 172L122 171L121 158Z" fill="#ddd6c2"/>
<path d="M126 158l6 4-3 5-5-2zM136 154l4 3-2 3z" fill="#8d7358" opacity="0.7"/>
<path d="M149 158L150 174" stroke="#c5bda8" stroke-width="1"/>
</g>
<!-- brown top -->
<path d="M124 171L174 169L172 208L130 209Z" fill="#6b3c28"/>
<path d="M125 178C140 180 158 179 173 177M126 186C142 188 158 187 173 185M127 194C142 196 158 195 172 193M128 202C142 203 158 203 172 201" stroke="#4a281a" stroke-width="1.3" fill="none" opacity="0.75"/>
<!-- midriff -->
<path d="M130 208L171 207L171 215L130 215Z" fill="#e6b186"/>
<path d="M148 211.5h4" stroke="#8a5d3e" stroke-width="1.2"/>
<!-- brown band -->
<path d="M129 214L183 213L184 237L130 238Z" fill="#5a3322"/>
<!-- arms -->
<g filter="url(#b05)">
<path d="M103 150C100 160 103 186 108 204C112 218 116 228 120 238L132 236C128 216 123 190 122 164L121 150Z" fill="#ecb88f"/>
<path d="M103 152C101 166 104 188 109 206C113 220 116 228 120 238L123 237C116 214 108 186 107 156Z" fill="#c98a5c" opacity="0.8"/>
<path d="M176 164C178 190 166 222 157 250L171 250C178 226 190 198 192 170L190 152C186 150 178 154 176 164Z" fill="#ecb88f"/>
<path d="M190 160C190 196 178 226 169 250L171 250C178 226 190 198 192 170Z" fill="#c98a5c" opacity="0.8"/>
</g>
<!-- front hair -->
<g filter="url(#b05)">
<path d="M148 52C138 54 131 62 127 74C123 88 120 98 112 108C104 120 102 134 108 144C112 150 118 153 124 153C133 150 139 138 141 126C142 116 140 108 143 100C139 92 135 78 139 64C141 58 144 54 148 52Z" fill="url(#hairL)"/>
<path d="M170 52C184 56 195 72 195 90C194 104 190 114 193 126C198 142 197 156 185 167C174 162 168 150 167 136C165 122 163 112 167 100C171 92 176 80 174 66C173 60 172 56 170 52Z" fill="url(#hairR)"/>
<path d="M133 72C130 92 124 112 119 142M137 98C134 114 128 130 126 148M186 72C188 92 183 112 188 142M178 100C175 120 176 140 181 160M172 96C170 116 171 134 174 152" stroke="#e6bd88" stroke-width="1.1" fill="none" opacity="0.6"/>
<path d="M130 76C127 94 120 110 113 128M126 100C122 116 116 130 118 146M136 104C134 120 130 136 124 150M190 74C192 92 187 110 192 132M182 96C180 116 180 138 186 160M175 104C172 122 173 140 177 156" stroke="#7a4622" stroke-width="1.400" fill="none" opacity="0.500"/>
<path d="M108 130C110 140 116 148 124 152M184 166C190 158 194 148 193 138" stroke="#6b3c1e" stroke-width="2" fill="none" opacity="0.450"/>
<path d="M144 54C152 46 168 46 177 54C170 51 158 51 150 56C146 58 143 62 141 66Z" fill="#d9b78a"/>
<path d="M171 54C178 62 180 78 175 94C172 102 170 110 170 118C174 110 182 100 185 88C187 74 182 60 174 54Z" fill="#6b4222" opacity="0.800"/>
</g>

<!-- under skirt: legs and inner layer -->
<rect x="60" y="276" width="176" height="34" fill="#cfd8d4"/>
<path d="M91 278L124 280L121 310L88 310Z" fill="#5e3222"/>
<path d="M100 282L110 282L108 310L98 310Z" fill="#7a452e" opacity="0.8"/>
<path d="M172 290L191 290L193 310L175 310Z" fill="#9a4c32"/>
<path d="M122 284l10 2-2 24-10 0zM150 288l10 0 0 22-10 0z" fill="#e6e9e3"/>
<!-- skirt -->
<g clip-path="url(#skc)">
<g filter="url(#b05)">
<path d="M67 220L76 222L84 226L100 232L119 235L184 236L190 232L200 242L212 251L228 257L240 263L241 276L238 290L226 286L204 292L186 294L170 291L150 288L128 285L108 282L92 280L76 284L62 292L46 290L49 274L45 252L52 236L60 226Z" fill="#e7e9e2"/>
<path d="M66 221L76 224L70 238L66 252L66 266L72 280L64 289L56 281L51 266L52 250L58 234Z" fill="#8a7762"/>
<path d="M92 246L112 240L132 238L150 242L166 248L170 262L160 270L146 266L130 258L112 256L98 254Z" fill="#8b7863"/>
<path d="M181 267L198 258L213 252L228 257L241 264L234 275L215 280L197 272Z" fill="#8b7964"/>
<path d="M78 226L100 232L118 236L104 242L90 246L80 244Z" fill="#cde0e3"/>
<path d="M132 240L150 242L158 238L170 244L166 248Z" fill="#d3e3e4"/>
<path d="M166 250L186 256L196 268L182 276L170 264Z" fill="#f1f0e8"/>
<path d="M74 258L98 256L116 260L128 272L108 280L90 278L78 272Z" fill="#f2f1ea"/>
<path d="M190 234L200 242L210 250L198 252L188 246Z" fill="#d5e3e3"/>
<path d="M118 236L134 238L132 246L122 246Z" fill="#a89478"/>
</g>
<rect x="40" y="215" width="210" height="95" filter="url(#nz2)" opacity="0.55"/>
</g>
<g filter="url(#b05)">
<path d="M46 290L62 292L76 300L80 310L44 310Z" fill="#d3dfde"/>
<path d="M62 292L76 284L92 280L86 296L80 310L76 300Z" fill="#e9ebe5"/>
<path d="M196 292L226 286L238 290L237 310L194 310Z" fill="#dde3dc"/>
<path d="M230 284L240 272L239 296L234 310L226 310Z" fill="#7d6449"/>
<path d="M62 292L76 284L92 280L108 282L128 285L150 288L170 291L186 294L204 292L226 286" stroke="#74634f" stroke-width="1.4" fill="none" opacity="0.55"/>
</g>
<!-- hands -->
<g filter="url(#b05)">
<path d="M118 230L132 230L135 242L128 248L121 246Z" fill="#d9a378"/>
<path d="M155 244L171 244L171 256L163 262L156 258Z" fill="#d9a378"/>
</g>
</g>
<path d="M0.5 0.5H303A6.5 6.5 0 0 1 309.5 7V304L304 309.5H7A6.5 6.5 0 0 1 0.5 303Z" fill="none" stroke="#d9d5c8" stroke-width="1"/>
</svg>

<!-- PHOTO-END -->
<!-- THUMBS-START -->
<svg width="0" height="0" style="position:absolute"><defs>
<clipPath id="tc"><path d="M0 0H55A6 6 0 0 1 61 6V56A5 5 0 0 1 56 61H6A6 6 0 0 1 0 55Z"/></clipPath>
<filter id="tb" x="-20%" y="-20%" width="140%" height="140%"><feGaussianBlur stdDeviation="0.6"/></filter>
<radialGradient id="tg" cx="0.5" cy="0.5" r="0.75"><stop offset="0" stop-color="#34302a"/><stop offset="1" stop-color="#22201b"/></radialGradient>
</defs></svg>
<!-- thumb 1 -->
<svg class="abs" style="left:279px;top:565px" width="61" height="61" viewBox="0 0 61 61">
<g clip-path="url(#tc)"><rect width="61" height="61" fill="#302f29"/>
<path d="M0 30L14 34V61H0Z" fill="#38362f"/>
<path d="M0 50L61 52V61H0Z" fill="#393730"/>
<g filter="url(#tb)">
<path d="M17 46L48 45L50 56L19 57Z" fill="#6a6c62"/>
<path d="M19 30L41 29L44 40L42 52L22 52L20 42Z" fill="#5d6a60"/>
<path d="M22 33l5 1 0 6-5-1zM30 32l6 0 1 7-6 1zM25 42l6 1 0 7-6 0zM34 41l6 0 0 8-6 0z" fill="#33403a"/>
<path d="M24 31h14l1 4h-14z" fill="#8c9086"/>
<path d="M16.500 11L35 12L41 30L42 34L38 34L34 20L24 18L19 22L18.500 32L15 34L15.500 22Z" fill="#6e5842"/>
<path d="M25 16.500L39 18L39 28.500L27 28.500Z" fill="#241712"/>
<path d="M18 4C20 1.500 25 2 25.500 6L26 14L24 22L21 18L19 20L17.500 12Z" fill="#6d5433"/>
<ellipse cx="21.700" cy="7" rx="2.200" ry="3" fill="#8a6c54"/>
<path d="M14 33L19 32L18 42L12 42Z" fill="#5e4a38"/>
<path d="M11.500 40L17.500 40L17 58L10 59Z" fill="#150f0c"/>
<path d="M38 33L43 32L50 40L46 43Z" fill="#5e4a38"/>
<path d="M45 42L49 39L57.500 54L53 57.500Z" fill="#150f0c"/>
</g></g>
<path d="M.5 .5H55A5.500 5.500 0 0 1 60.500 6V56A4.500 4.500 0 0 1 56 60.500H6A5.500 5.500 0 0 1 .5 55Z" fill="none" stroke="#8c8c88"/>
</svg>
<!-- thumb 2 -->
<svg class="abs" style="left:354px;top:565px" width="61" height="61" viewBox="0 0 61 61">
<g clip-path="url(#tc)"><rect width="61" height="61" fill="url(#tg)"/>
<g filter="url(#tb)">
<path d="M10 12C12 9 17 9 18 13L17 22L16 34L13 42L11 36L10 26L9 18Z" fill="#7f6a3e"/>
<path d="M11 16l0 22M14 16l0 22" stroke="#9a854f" stroke-width="0.8" opacity="0.7"/>
<ellipse cx="14.5" cy="12.5" rx="3" ry="3.2" fill="#8a6e58"/>
<path d="M17 13L27 12L38 18L50 24L52 28L44 28L36 27L30 30L24 24L17 19Z" fill="#8c1a1c"/>
<path d="M24 8L28 5L31 8L38 17L35 18L28 11Z" fill="#7a5a48"/>
<path d="M23 6l6-2 2 2-5 3z" fill="#8d8a80"/>
<path d="M34 26L44 27L50 28L49 36L46 45L43 44L45 34L40 33L38 46L36 61L30 61L33 44Z" fill="#0b0a09"/>
<path d="M36 28l8 2-2 10-5 0z" fill="#8c1a1c"/>
</g></g>
<path d="M.5 .5H55A5.5 5.5 0 0 1 60.5 6V56A4.5 4.5 0 0 1 56 60.5H6A5.5 5.5 0 0 1 .5 55Z" fill="none" stroke="#8c8c88"/>
</svg>
<!-- thumb 3 -->
<svg class="abs" style="left:429px;top:565px" width="61" height="61" viewBox="0 0 61 61">
<g clip-path="url(#tc)"><rect width="61" height="61" fill="url(#tg)"/>
<path d="M0 46L61 47V61H0Z" fill="#2b2822"/>
<g filter="url(#tb)">
<path d="M13 20H30V33H13Z" fill="#6e5c30"/>
<path d="M16 22H28V31H16Z" fill="#4d4126"/>
<path d="M12 33H57V41H12Z" fill="#7a6634"/>
<path d="M14 35H56" stroke="#3a2c18" stroke-width="1.2"/>
<path d="M12 41h2.5v15h-2.5zM54 41h2.5v15h-2.5zM12 20h2v14h-2zM55 24h2v10h-2z" fill="#5a4826"/>
<path d="M31 17L40 17L41 30L32 30Z" fill="#55554e"/>
<path d="M41 12C42 8 47 8 48 12L50 18L52 24L52 36L44 38L41 32L42 20Z" fill="#0e0c0b"/>
<path d="M41 10C43 7 47 7 48 11L49 18L46 16L42 18Z" fill="#7d6a40"/>
<ellipse cx="44" cy="12.5" rx="2.4" ry="3" fill="#8a6c56"/>
<path d="M50 18L55 26L54 34L51 32L52 27Z" fill="#80604a"/>
<path d="M53 30l4 1 0 8-4 0z" fill="#6a1c18"/>
<path d="M42 29L20 29L4 30L3 32L20 33L42 34Z" fill="#86664e"/>
<path d="M44 34L32 33L29 37L27 50L25 57L28 58L31 46L34 38L44 38Z" fill="#8a6a52"/>
<path d="M36 20l5 2 0 6-5 0z" fill="#80604a"/>
</g></g>
<path d="M.5 .5H55A5.5 5.5 0 0 1 60.5 6V56A4.5 4.5 0 0 1 56 60.5H6A5.5 5.5 0 0 1 .5 55Z" fill="none" stroke="#8c8c88"/>
</svg>
<!-- thumb 4 -->
<svg class="abs" style="left:504px;top:565px" width="61" height="61" viewBox="0 0 61 61">
<defs><radialGradient id="tg4" cx="0.35" cy="0.4" r="0.75"><stop offset="0" stop-color="#3d3834"/><stop offset="1" stop-color="#1c1a18"/></radialGradient></defs>
<g clip-path="url(#tc)"><rect width="61" height="61" fill="url(#tg4)"/>
<g filter="url(#tb)">
<path d="M30 18C36 16 42 20 43 28L42 38L34 40L30 30Z" fill="#6a6256"/>
<path d="M23 16L31 15L33 24L30 30L25 28L23 22Z" fill="#8a8078"/>
<path d="M19 14C24 10 30 10 34 12C40 12 46 16 48 19C42 18 34 17 28 17C24 17 21 16 19 14Z" fill="#0c0b0b"/>
<path d="M26 8C30 5 38 6 41 10L42 16L27 15Z" fill="#0e0d0d"/>
<path d="M26 32L34 34L44 36L54 44L61 54V61H24L22 48Z" fill="#4e3c38"/>
<path d="M28 34L33 40L31 56L27 48Z" fill="#1f1917"/>
<path d="M17 28l2 0 2 26-3 0z" fill="#141211"/>
<path d="M12 40L22 36L25 44L22 54L16 52Z" fill="#1a1716"/>
</g></g>
<path d="M.5 .5H55A5.5 5.5 0 0 1 60.5 6V56A4.5 4.5 0 0 1 56 60.5H6A5.5 5.5 0 0 1 .5 55Z" fill="none" stroke="#8c8c88"/>
</svg>
<!-- thumb 5 -->
<svg class="abs" style="left:579px;top:565px" width="61" height="61" viewBox="0 0 61 61">
<g clip-path="url(#tc)"><rect width="61" height="61" fill="#3a3836"/>
<path d="M0 0H30L24 30L0 40Z" fill="#44423f"/>
<g filter="url(#tb)">
<path d="M13 3L24 6L12 52L2 50Z" fill="#0a0a0a"/>
<path d="M22 30C26 26 32 25 36 27L44 27C50 26 56 30 60 36L61 52L24 52Z" fill="#7c3030"/>
<path d="M23 32h36M22 36h38M22 40h39M23 44h38M24 48h37" stroke="#a89890" stroke-width="1.6" opacity="0.75"/>
<path d="M33 16L46 16L47 24L43 30L37 30L33 24Z" fill="#8e6c58"/>
<path d="M32 18L34 17L35 30L32 34L30 28Z" fill="#3a271c"/>
<path d="M27 14C30 4 50 3 54 13L56 18C48 15 34 15 26 19Z" fill="#8f8264"/>
<path d="M30 10C34 5 47 5 51 10L52 14L30 14Z" fill="#9c8e6e"/>
<path d="M50 44L60 46L61 56L50 54Z" fill="#8e6c58"/>
<ellipse cx="28" cy="55" rx="22" ry="5" fill="#0c0c0c"/>
<ellipse cx="30" cy="54" rx="6" ry="1.6" fill="#6c6a62"/>
<path d="M0 50L14 52L16 61H0Z" fill="#141414"/>
</g></g>
<path d="M.5 .5H55A5.5 5.5 0 0 1 60.5 6V56A4.5 4.5 0 0 1 56 60.5H6A5.5 5.5 0 0 1 .5 55Z" fill="none" stroke="#8c8c88"/>
</svg>

<!-- THUMBS-END -->

<!-- status bar -->
<div class="hl" style="top:710px;height:7px;background:#fff"></div>
<div class="hl" style="top:717px;background:#8e8e88"></div>
<div class="t" style="left:18px;top:720px;letter-spacing:0.5px">Готово</div>
<div class="pan" style="left:737px;width:22px"></div>
<div class="pan" style="left:761px;width:22px"></div>
<div class="pan" style="left:784px;width:22px"></div>
<div class="pan" style="left:807px;width:204px"></div>
<div class="t" style="left:828px;top:720px">Интернет</div>

<!-- taskbar -->
<div class="tb" style="left:0;width:53px"></div>
<div class="t" style="left:21px;top:744px;font-weight:bold;letter-spacing:0.7px;-webkit-text-stroke:0.35px #000">Пуск</div>
<div class="tb" style="left:67px;width:159px"></div>
<div class="t" style="left:89px;top:744px">CorelDRAW 11 - [C:\_PR...</div>
<div class="tb" style="left:230px;width:157px"></div>
<div class="t" style="left:249px;top:744px;letter-spacing:0.08px">about:blank - Microsoft In...</div>
<div class="t" style="left:970px;top:745px;font-family:'Liberation Serif',serif;font-size:12px;letter-spacing:0.5px;-webkit-text-stroke:0.15px #000">18:33</div>

</body>
</html>
